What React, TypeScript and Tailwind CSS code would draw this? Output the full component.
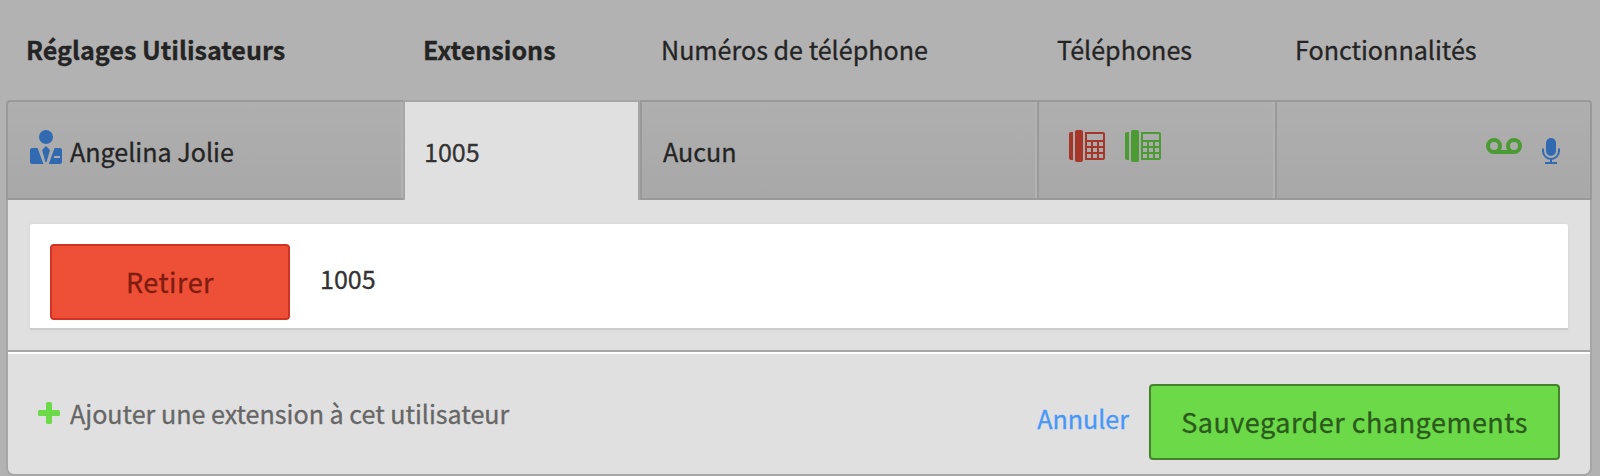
import type { ReactNode } from 'react';
import clsx from 'clsx';

const HEADERS = [
  { label: 'Réglages Utilisateurs', width: 'w-[397px]', bold: true },
  { label: 'Extensions', width: 'w-[238px]', bold: true },
  { label: 'Numéros de téléphone', width: 'w-[396px]' },
  { label: 'Téléphones', width: 'w-[238px]' },
  { label: 'Fonctionnalités', width: 'w-[290px]' },
];

function UserIcon() {
  return (
    <svg width="32" height="34" viewBox="0 0 32 34" fill="#326ab1">
      <circle cx="16" cy="7" r="7" />
      <path d="M2 18H7.5L13.5 34H2Q0 34 0 32V20Q0 18 2 18Z" />
      <path
        fillRule="evenodd"
        d="M24.5 18H30Q32 18 32 20V32Q32 34 30 34H18.8ZM24 26V28H30V26Z"
      />
      <path d="M16 16L20 20L16.6 32H15.4L12 20Z" />
    </svg>
  );
}

function PhoneIcon({ color }: { color: string }) {
  return (
    <svg width="36" height="32" viewBox="0 0 36 32" fill={color}>
      <path d="M2 2H4V30H2Q0 30 0 28V4Q0 2 2 2Z" />
      <rect x="6" y="0" width="8" height="32" rx="2" />
      <path
        fillRule="evenodd"
        d="M16 2H34Q36 2 36 4V28Q36 30 34 30H16ZM18 4V10H34V4ZM18 12V16H22V12ZM24 12V16H28V12ZM30 12V16H34V12ZM18 18V22H22V18ZM24 18V22H28V18ZM30 18V22H34V18ZM18 24V28H22V24ZM24 24V28H28V24ZM30 24V28H34V24Z"
      />
    </svg>
  );
}

function VoicemailIcon() {
  return (
    <svg width="36" height="16" viewBox="0 0 36 16" fill="none" stroke="#4c9a33" strokeWidth="4">
      <circle cx="8" cy="8" r="6" />
      <circle cx="28" cy="8" r="6" />
      <path d="M8 14H28" />
    </svg>
  );
}

function MicIcon() {
  return (
    <svg width="18" height="26" viewBox="0 0 18 26" fill="none" stroke="#326ab1" strokeWidth="2">
      <rect x="4" y="0" width="10" height="18" rx="5" fill="#326ab1" stroke="none" />
      <path d="M1 10.5V13A8 8 0 0 0 17 13V10.5" />
      <path d="M9 21V25M3 25H15" />
    </svg>
  );
}

function Cell({ className, children }: { className: string; children?: ReactNode }) {
  return (
    <div
      className={clsx(
        'flex h-[100px] border-y-2 border-l-2 border-[#999] bg-linear-to-b from-[#afafaf] to-[#a8a8a8]',
        className,
      )}
    >
      {children}
    </div>
  );
}

export default function App() {
  return (
    <div className="h-[476px] w-[1600px] overflow-hidden bg-[#b2b2b2] pl-1.5 font-['Noto_Sans_CJK_SC',sans-serif] text-[25.1px] leading-10 text-[#242424] [-webkit-text-stroke:0.3px]">
      <div className="flex h-[100px] pt-[29px] pl-5">
        {HEADERS.map((h) => (
          <div key={h.label} className={clsx('whitespace-nowrap', h.width, h.bold && 'font-bold')}>
            {h.label}
          </div>
        ))}
      </div>

      <div className="flex w-[1586px]">
        <Cell className="w-[397px] rounded-tl-[4px] pt-7 pl-[22px]">
          <UserIcon />
          <span className="mt-px ml-2 flex-1 whitespace-nowrap">Angelina Jolie</span>
          <span className="-mt-7 w-0.5 bg-[#b2b2b2]" />
        </Cell>
        <div className="h-[100px] w-[237px] border-x-2 border-t-2 border-[#a6a6a6] bg-[#e0e0e0] pt-[29px] pl-[19px] text-[#333]">
          1005
        </div>
        <Cell className="w-[397px] pl-[21px]">
          <span className="mt-[29px] flex-1">Aucun</span>
          <span className="w-0.5 bg-[#b2b2b2]" />
        </Cell>
        <Cell className="w-[238px] pl-[30px]">
          <div className="flex flex-1 gap-5 pt-7">
            <PhoneIcon color="#a63728" />
            <PhoneIcon color="#4c9a33" />
          </div>
          <span className="w-0.5 bg-[#b2b2b2]" />
        </Cell>
        <Cell className="flex-1 justify-end gap-5 rounded-tr-[4px] border-r-2 pt-9 pr-[30px]">
          <VoicemailIcon />
          <MicIcon />
        </Cell>
      </div>

      <div className="h-[276px] w-[1586px] rounded-b-[8px] border-x-2 border-b-2 border-[#a6a6a6] bg-[#e0e0e0]">
        <div className="h-[152px] border-b-2 border-[#a6a6a6] px-[22px] pt-6">
          <div className="flex h-[106px] rounded-t-[2px] border-b-2 border-[#ccc] bg-white pt-5 pl-5 shadow-[0_0_4px_rgba(0,0,0,0.05)]">
            <button className="h-[76px] w-60 rounded-[4px] border-2 border-[#d13224] bg-[#ee4f37] text-[27px] tracking-[0.5px] text-[#7f1c10]">
              Retirer
            </button>
            <span className="mt-[14px] ml-[30px] text-[#333]">1005</span>
          </div>
        </div>
        <div className="flex h-[122px] border-t-2 border-white pr-[30px] pl-[30px]">
          <svg className="mt-12" width="22" height="22" viewBox="0 0 22 22" fill="#6cd948">
            <rect x="8" y="0" width="6" height="22" rx="1.5" />
            <rect x="0" y="8" width="22" height="6" rx="1.5" />
          </svg>
          <span className="mt-[39px] ml-[10px] flex-1 text-[#666]">Ajouter une extension à cet utilisateur</span>
          <a className="mt-11 mr-5 text-[#4797f8]">Annuler</a>
          <button className="mt-[30px] h-[76px] w-[411px] rounded-[4px] border-2 border-[#44832c] bg-[#6cd948] text-[27px] tracking-[0.5px] whitespace-nowrap text-[#2b5a1c]">
            Sauvegarder changements
          </button>
        </div>
      </div>
    </div>
  );
}
